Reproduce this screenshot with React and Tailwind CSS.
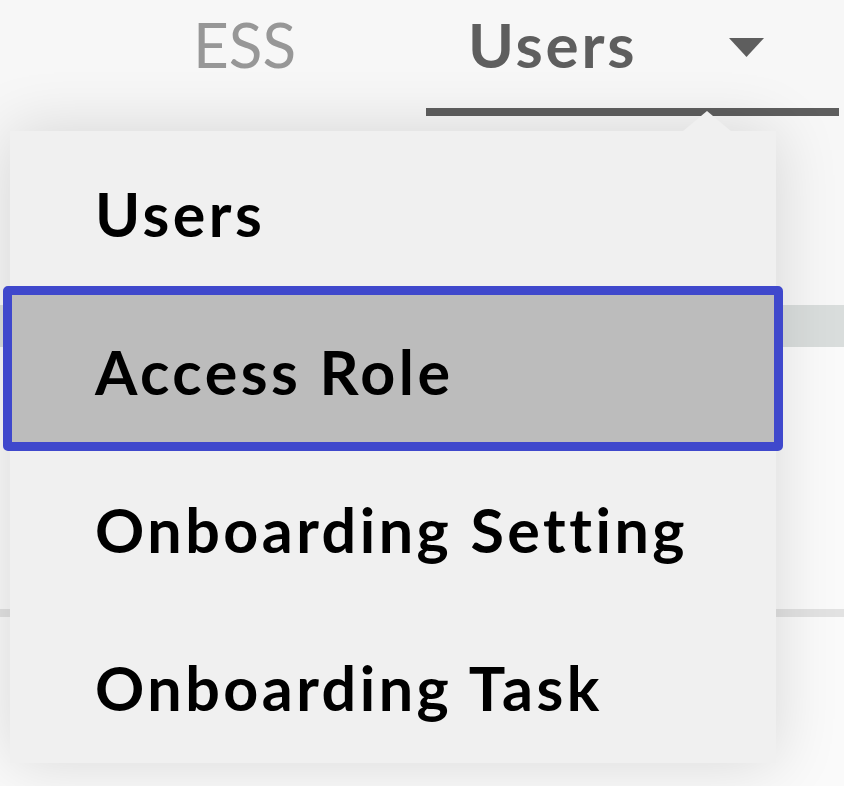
import React from 'react';

const items = ['Users', 'Access Role', 'Onboarding Setting', 'Onboarding Task'];

export default function App() {
    return (
        <div className="relative w-[844px] h-[786px] overflow-hidden bg-[#f7f7f7] font-['Lato',sans-serif]">
            {/* Top tabs */}
            <div className="flex h-[116px] items-start">
                <div className="ml-[193px] pt-[4px] text-[62px] leading-[80px] text-[#979797]">ESS</div>
                <div className="ml-[130px] w-[413px] h-[116px] flex items-start pl-[42px] pt-[4px] border-b-8 border-[#5e5e5e]">
                    <span className="text-[62px] leading-[80px] font-bold tracking-[0.045em] text-[#5e5e5e]">Users</span>
                    <svg className="ml-[92px] mt-[34px]" width="35" height="19" viewBox="0 0 35 19">
                        <path d="M0 0 H35 L17.5 19 Z" fill="#5e5e5e" />
                    </svg>
                </div>
            </div>

            {/* Page content behind the menu */}
            <div className="mt-[189px] h-[42px] bg-[#d9dddc]"></div>
            <div className="h-[262px] bg-[#fafafa]"></div>
            <div className="h-[8px] bg-[#e2e2e2]"></div>
            <div className="h-[169px] bg-[#fafafa]"></div>

            {/* Dropdown menu */}
            <div className="absolute left-[10px] top-[131px] w-[766px] h-[632px] bg-[#f0f0f0] shadow-[0_0_60px_rgba(0,0,0,0.14)]">
                <div className="absolute -top-[20px] left-[673px] w-0 h-0 border-l-[24px] border-r-[24px] border-b-[20px] border-l-transparent border-r-transparent border-b-[#f0f0f0]"></div>
                <div className="flex flex-col pt-[4px]">
                    {items.map((label, i) => (
                        <div key={label} className="relative h-[158px] flex items-center pl-[85px]">
                            {i === 1 && (
                                <div className="absolute -left-[7px] -right-[7px] -top-[7px] bottom-0 border-[9px] border-[#3f48cc] rounded-[5px] bg-[#bcbcbc]"></div>
                            )}
                            <span className="relative text-[61px] font-bold tracking-[0.057em] text-black">{label}</span>
                        </div>
                    ))}
                </div>
            </div>
        </div>
    );
}
